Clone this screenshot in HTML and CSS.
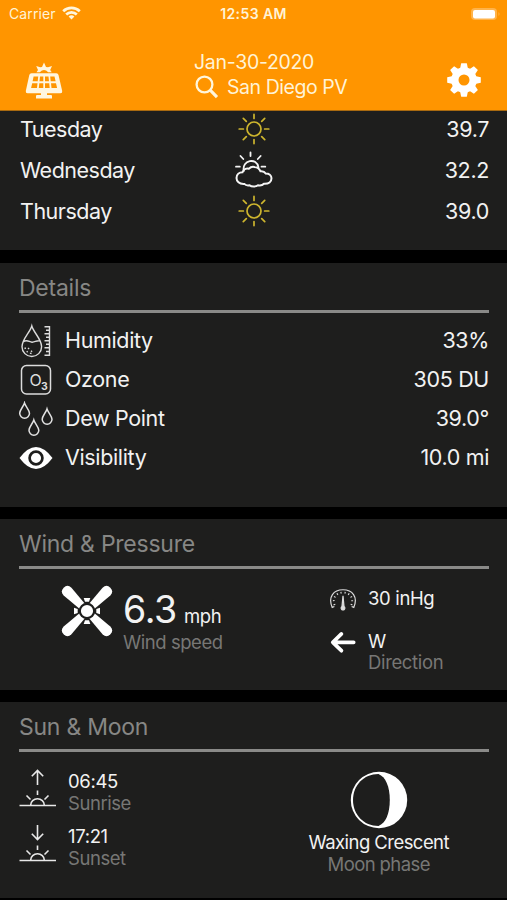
FILE: index.html
```html
<!DOCTYPE html>
<html lang="en">
<head>
  <meta charset="UTF-8">
  <meta name="viewport" content="width=device-width, initial-scale=1.0">
  <title>San Diego PV</title>
  <link rel="stylesheet" href="styles.css">
</head>
<body>
  <header class="header">
    <div class="status">
      <div class="carrier">
        <span>Carrier</span>
        <svg width="19" height="14" viewBox="0 0 19 14" fill="none" stroke="#fff6dc" stroke-width="2.700">
          <path d="M1.2 5.3a12 12 0 0 1 16.6 0M4.2 8.5a7.6 7.6 0 0 1 10.6 0"/>
          <path d="M9.5 13.6L6.6 10.6a4.2 4.2 0 0 1 5.8 0z" fill="#fff6dc" stroke="none"/>
        </svg>
      </div>
      <div class="clock">12:53 AM</div>
      <div class="battery">
        <svg width="31" height="14" viewBox="0 0 31 14">
          <rect x="1" y="1" width="26" height="12" rx="4" fill="#ffb34a"/>
          <rect x="3" y="3" width="22" height="8.500" rx="2" fill="#fff"/>
          <path d="M28.500 5v4q2-2 0-4z" fill="#ffb34a"/>
        </svg>
      </div>
    </div>
    <div class="nav">
      <svg class="solar" width="38" height="38" viewBox="0 0 38 38">
        <path d="M6.500 11.300h24.800q1.800 0 2.200 1.700L37.200 29q.3 2.300-1.700 2.300H2.500Q.5 31.300.8 29L4.300 13q.4-1.700 2.200-1.700z" fill="#fff6e0"/>
        <path d="M8.600 14.600h4.600l-.5 4.600H7.600zM15 14.600h3.300v4.600h-3.800zM20 14.600h3.500l.5 4.600h-4zM25.200 14.600h4.300l1.100 4.600h-4.900zM7.200 21.200h5.300l-.5 4.800H6.100zM14.300 21.200h4V26h-4.500zM20 21.200h4.200l.5 4.800H20zM26 21.200h5l1.100 4.800h-5.600z" fill="#ff9500"/>
        <path d="M11.500 10.300l1.500-2.300-1.800-4 4 1.200L17 5l2-4.500L21 5l2 .2 4-1.200-1.800 4 1.500 2.300h-3.500q-4.200-4.500-8.400 0zM16 31h6v2h4q1 0 1 1v2.500H11V34q0-1 1-1h4z" fill="#fff6e0"/>
      </svg>
      <div class="place">
        <div class="date">Jan-30-2020</div>
        <div class="search">
          <svg width="24" height="24" viewBox="0 0 24 24" fill="none" stroke="#fff6dc">
            <circle cx="9.500" cy="9.500" r="7.900" stroke-width="2.300"/>
            <path d="M15.200 15.200L22 22.200" stroke-width="3.100"/>
          </svg>
          <span class="city">San Diego PV</span>
        </div>
      </div>
      <svg class="gear" width="36" height="36" viewBox="-18 -18 36 36">
        <g fill="#fff">
          <circle r="12.800"/>
          <path id="tooth" d="M-4-11L-2.800-16.800h5.600L4-11v22l-1.200 5.800h-5.600L-4 11z"/>
          <use href="#tooth" transform="rotate(45)"/>
          <use href="#tooth" transform="rotate(90)"/>
          <use href="#tooth" transform="rotate(135)"/>
        </g>
        <circle r="5.500" fill="#ff9500"/>
      </svg>
    </div>
  </header>

  <section class="panel forecast">
    <div class="day">
      <span class="name">Tuesday</span>
      <svg width="40" height="40" viewBox="-20 -20 40 40" fill="none" stroke="#cdb52e" stroke-width="1.700" stroke-linecap="round">
        <g id="sun">
          <circle r="7"/>
          <path d="M0-10.600v-4M0 10.600v4M-10.600 0h-4.200M10.600 0h4.200M-7.700-7.700l-3-3M7.700 7.700l3 3M-7.700 7.700l-3 3M7.700-7.700l3-3"/>
        </g>
      </svg>
      <span class="value">39.7</span>
    </div>
    <div class="day">
      <span class="name">Wednesday</span>
      <svg width="40" height="40" viewBox="0 0 40 40" fill="none" stroke="#f4f4f4" stroke-width="2" stroke-linecap="round">
        <path d="M10.500 34C5 34.500 2.500 31 2.500 28c0-3.500 2.800-5.700 6-5.700 1-3 3.800-4.300 6.500-3.600 1.500-1.700 3.500-2.200 5.500-1.700 3 .3 5 2 6 4.300 2.800-.3 4.300.7 5.200 2.200 3.300 0 5.800 1.800 5.800 4.800 0 3.500-2.700 5.800-7.500 5.500-1.500 1.500-4 2-6 1.500-2 1.700-6.500 1.700-8.500 0-2 .3-4 0-5-1.300z"/>
        <path d="M9.800 21C7.500 10 23 7 24.500 17.500M16.500 2.500v3.500M6.500 6l2.800 3M26.600 6l-2.800 3M2 16.700h3.800M27.500 16.700h3.800" stroke-width="1.800"/>
      </svg>
      <span class="value">32.2</span>
    </div>
    <div class="day">
      <span class="name">Thursday</span>
      <svg width="40" height="40" viewBox="-20 -20 40 40" fill="none" stroke="#cdb52e" stroke-width="1.700" stroke-linecap="round">
        <use href="#sun"/>
      </svg>
      <span class="value">39.0</span>
    </div>
  </section>

  <section class="panel details">
    <h2 class="title">Details</h2>
    <div class="detail">
      <svg width="36" height="36" viewBox="0 0 36 36" fill="none" stroke="#dcdcdc" stroke-width="1.400">
        <path d="M13.800 3C12 9.500 4 16 4 23.700a9.800 9.800 0 0 0 19.600 0C23.600 16 15.500 9.500 13.800 3zM5 19c4-3 6 0 9 .2 3 .2 5-2.500 8.500-1.200"/>
        <path d="M7 24.500q1 5.500 7 6M10 25l5 4.500" stroke-dasharray="1.500 2.500"/>
        <path d="M26.500 3.700h5v28.500h-5M28 7.200h3M26.500 10.700h5M28 14.200h3M26.500 17.700h5M28 21.200h3M26.500 24.700h5M28 28.500h3"/>
      </svg>
      <span class="label">Humidity</span>
      <span class="value">33%</span>
    </div>
    <div class="detail">
      <svg width="36" height="36" viewBox="0 0 36 36">
        <rect x="3.500" y="3.500" width="29" height="28.500" rx="5" fill="none" stroke="#dcdcdc" stroke-width="1.500"/>
        <text class="oxygen" x="11.500" y="23.500">O</text>
        <text class="three" x="23" y="28">3</text>
      </svg>
      <span class="label">Ozone</span>
      <span class="value">305 DU</span>
    </div>
    <div class="detail">
      <svg width="36" height="36" viewBox="0 0 36 36" fill="none" stroke="#e2e2e2" stroke-width="1.500">
        <path id="drop" d="M6.500 2C5.500 5.500 1.700 9 1.700 12.300a4.900 4.900 0 0 0 9.800 0C11.500 9 7.500 5.500 6.500 2z"/>
        <use href="#drop" x="22.500" y="6"/>
        <use href="#drop" x="9.300" y="17"/>
      </svg>
      <span class="label">Dew Point</span>
      <span class="value">39.0°</span>
    </div>
    <div class="detail">
      <svg width="36" height="36" viewBox="0 0 36 36">
        <path d="M1.500 18Q18-4 34.500 18 18 40 1.500 18z" fill="#fff"/>
        <circle cx="18" cy="18" r="6.400" fill="none" stroke="#1e1e1d" stroke-width="2.700"/>
      </svg>
      <span class="label">Visibility</span>
      <span class="value">10.0 mi</span>
    </div>
  </section>

  <section class="panel wind">
    <h2 class="title">Wind &amp; Pressure</h2>
    <div class="wind-body">
      <svg class="fan" width="52" height="52" viewBox="-26 -26 52 52">
        <g id="fin">
          <path d="M-3.300-13h6.600L2-9.300h-4z" fill="#fff"/>
        </g>
        <use href="#fin" transform="rotate(90)"/>
        <use href="#fin" transform="rotate(180)"/>
        <use href="#fin" transform="rotate(270)"/>
        <g fill="#fff">
          <g id="blade" transform="rotate(45)">
            <path d="M-3.500-5L-5.500-27.500Q-5.300-33 0-33T5.500-27.500L3.500-5z"/>
          </g>
          <use href="#blade" transform="rotate(90)"/>
          <use href="#blade" transform="rotate(180)"/>
          <use href="#blade" transform="rotate(270)"/>
          <circle r="7.200" stroke="#1e1e1d" stroke-width="2.200"/>
        </g>
      </svg>
      <div class="speed">
        <div class="reading"><span class="number">6.3</span><span class="unit">mph</span></div>
        <div class="sub">Wind speed</div>
      </div>
      <div class="air">
        <div class="air-row">
          <svg width="26" height="23" viewBox="0 0 28 24" fill="none" stroke="#dcdcdc" stroke-width="1.300">
            <path d="M4.700 19.500l-2.300 1C-2.500 9 4 1.500 14 1.500S30.500 9 25.600 20.500l-2.300-1"/>
            <path d="M5 18C2 10 7 4.500 14 4.500S26 10 23 18" stroke-width="2" stroke-dasharray="1.200 3"/>
            <path d="M14 8l-1.100 11.500a2 2 0 1 0 2.200 0z" fill="#dcdcdc"/>
          </svg>
          <span class="small">30 inHg</span>
        </div>
        <div class="air-row direction">
          <svg width="26" height="23" viewBox="0 0 28 24" fill="none" stroke="#fff" stroke-width="4" stroke-linecap="round" stroke-linejoin="round">
            <path d="M25.500 11.800H4M12.300 2.800L3 11.800l9.300 9"/>
          </svg>
          <span class="small">W</span>
        </div>
        <div class="sub dir">Direction</div>
      </div>
    </div>
  </section>

  <section class="panel sky">
    <h2 class="title">Sun &amp; Moon</h2>
    <div class="sky-body">
      <div class="sun-times">
        <div class="sun-row">
          <svg width="38" height="40" viewBox="0 0 38 40" fill="none" stroke="#e8e8e8" stroke-width="1.600">
            <path d="M18.500 17V2.500M12.800 8.200l5.700-5.700 5.700 5.700"/>
            <path id="horizon" d="M.5 37.500h36.500M11.700 37a6.800 6.200 0 0 1 13.600 0M18.500 22.500v4.500M7.500 27.500l4 4M29.500 27.500l-4 4"/>
          </svg>
          <div class="sun-text">
            <div class="small">06:45</div>
            <div class="sub">Sunrise</div>
          </div>
        </div>
        <div class="sun-row">
          <svg width="38" height="40" viewBox="0 0 38 40" fill="none" stroke="#e8e8e8" stroke-width="1.600">
            <path d="M18.500 2v14.500M12.800 10.800l5.700 5.700 5.700-5.700"/>
            <use href="#horizon"/>
          </svg>
          <div class="sun-text">
            <div class="small">17:21</div>
            <div class="sub">Sunset</div>
          </div>
        </div>
      </div>
      <div class="moon">
        <svg width="58" height="58" viewBox="0 0 58 58">
          <circle cx="29" cy="29" r="28.200" fill="#fff"/>
          <path d="M28.500 3C13.500 3 3 14.500 3 29s10.500 26 25.500 26C35.500 52 39.800 43 39.800 29S35.500 6 28.500 3z" fill="#1e1e1d"/>
        </svg>
        <div class="small phase">Waxing Crescent</div>
        <div class="sub phase-label">Moon phase</div>
      </div>
    </div>
  </section>
</body>
</html>
```
FILE: styles.css
```css
* {
  box-sizing: border-box;
}

body {
  margin: 0;
  height: 900px;
  overflow: hidden;
  background: #000;
  color: #f2f2f2;
  font-family: Inter, "Liberation Sans", sans-serif;
  font-size: 21.5px;
  letter-spacing: -0.35px;
}

svg {
  display: block;
  flex: none;
}

.header {
  height: 111px;
  background: #ff9500;
  color: #fff3d6;
  border-bottom: 1px solid #a96a10;
}

.status {
  display: grid;
  grid-template-columns: 1fr 1fr 1fr;
  align-items: center;
  height: 27px;
  padding: 0 6px;
  font-size: 14px;
  letter-spacing: 0.1px;
}

.carrier {
  display: flex;
  align-items: center;
  gap: 6px;
  padding-left: 3px;
}

.carrier svg {
  margin-top: -2px;
}

.clock {
  text-align: center;
  font-weight: 600;
  letter-spacing: 0.4px;
}

.battery {
  display: flex;
  justify-content: flex-end;
}

.nav {
  display: flex;
  padding: 0 25px;
}

.solar {
  margin-top: 35px;
}

.place {
  margin-left: 131px;
  font-size: 19.5px;
  line-height: 25px;
  padding-top: 23px;
  letter-spacing: -0.3px;
}

.city {
  letter-spacing: -0.45px;
}

.search {
  display: flex;
  gap: 8px;
}

.search svg {
  margin: 0 0 0 1px;
}

.gear {
  margin: 35px 0 0 auto;
}

.panel {
  background: #1e1e1d;
  padding: 0 18px 0 19px;
  margin-bottom: 12px;
}

.forecast {
  display: flex;
  flex-direction: column;
  justify-content: flex-end;
  height: 139px;
  margin-bottom: 13px;
  padding-bottom: 19px;
}

.day {
  display: grid;
  grid-template-columns: 1fr 40px 1fr;
  align-items: center;
  flex: none;
  height: 41px;
}

.name {
  padding-left: 1px;
  letter-spacing: -0.5px;
}

.value {
  text-align: right;
  margin-left: auto;
}

.details {
  height: 244px;
}

.title {
  margin: 0 0 8px;
  height: 50px;
  border-bottom: 3px solid #8a8a88;
  color: #878785;
  font-size: 23px;
  font-weight: 400;
  line-height: 51px;
  letter-spacing: -0.25px;
}

.detail {
  display: flex;
  align-items: center;
  height: 39px;
}

.detail svg {
  margin-left: -1px;
}

.detail .label,
.detail .value {
  padding-bottom: 1px;
}

.label {
  margin-left: 11px;
}

.oxygen {
  fill: #dcdcdc;
  font-size: 16px;
}

.three {
  fill: #dcdcdc;
  font-size: 10.5px;
  font-weight: 700;
}

.wind {
  height: 171px;
}

.wind-body {
  display: flex;
  padding-left: 42px;
}

.fan {
  margin-top: 8px;
}

.speed {
  width: 217px;
  padding: 10px 0 0 10px;
}

.reading {
  display: flex;
  align-items: baseline;
  gap: 7px;
  line-height: 46px;
  height: 44px;
}

.number {
  font-size: 37.5px;
}

.unit,
.small,
.sub {
  font-size: 18.5px;
  line-height: 22px;
}

.sub {
  color: #777775;
  letter-spacing: -0.45px;
}

.air {
  padding-top: 11px;
}

.air-row {
  display: flex;
  gap: 12px;
  height: 24px;
}

.air-row .small {
  margin-top: -1px;
}

.direction {
  margin-top: 19px;
}

.dir {
  margin: -4px 0 0 38px;
  letter-spacing: -0.35px;
}

.sky {
  height: 196px;
  margin-bottom: 0;
}

.sky-body {
  display: flex;
  justify-content: space-between;
  padding-right: 40px;
}

.sun-times {
  padding-top: 8px;
}

.sun-row {
  display: flex;
  gap: 11px;
  height: 55px;
}

.sun-text {
  padding-top: 2px;
}

.moon {
  display: flex;
  flex-direction: column;
  align-items: center;
  padding-top: 11px;
}

.phase {
  margin-top: 2px;
  letter-spacing: -0.55px;
}

.phase-label {
  letter-spacing: -0.6px;
}
```
